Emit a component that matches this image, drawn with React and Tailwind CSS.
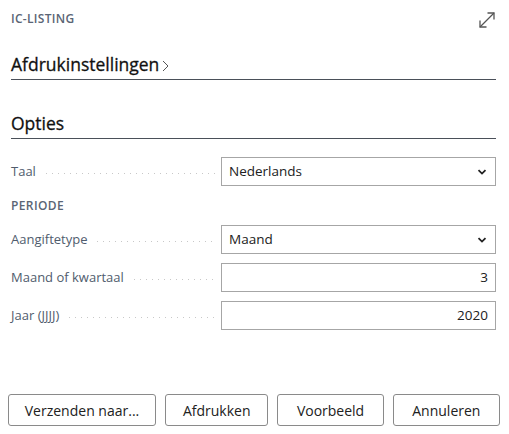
import React from 'react';

const font = { fontFamily: '"Open Sans", "Noto Sans", sans-serif' };

const Chevron = () => (
  <svg width="12" height="12" viewBox="0 0 12 12" className="text-[#212121]">
    <path d="M2.5 4.2 L6 7.6 L9.5 4.2" fill="none" stroke="currentColor" strokeWidth="1.8" />
  </svg>
);

const ExpandIcon = () => (
  <svg width="22" height="22" viewBox="0 0 22 22" className="text-[#555]">
    <path d="M4 18 L18 4" stroke="currentColor" strokeWidth="1.3" fill="none" />
    <path d="M11.5 4 H18 V10.5" stroke="currentColor" strokeWidth="1.3" fill="none" />
    <path d="M4 11.5 V18 H10.5" stroke="currentColor" strokeWidth="1.3" fill="none" />
  </svg>
);

const Field = ({ label, children }) => (
  <div className="flex items-center h-[29px]">
    <div className="w-[210px] flex items-center pr-[6px]">
      <span className="text-[13px] text-[#505c6d] whitespace-nowrap">{label}</span>
      <span className="flex-1 ml-[10px] mt-[4px] h-[1px] bg-[linear-gradient(to_right,#c8c8c8_1px,transparent_1px)] bg-[length:6px_1px]" />
    </div>
    <div className="flex-1 h-full border border-[#a6a6a6] bg-white flex items-center px-[7px] text-[13.5px] text-[#212121]">
      {children}
    </div>
  </div>
);

const App = () => {
  return (
    <div className="w-[509px] h-[434px] bg-white flex flex-col px-[11px] pr-[13px] overflow-hidden" style={font}>
      <div className="flex items-center justify-between h-[36px] pt-[1px]">
        <span className="text-[12px] font-semibold text-[#5a6575] tracking-[0.3px]">IC-LISTING</span>
        <span className="-mr-[2px] mt-[2px]"><ExpandIcon /></span>
      </div>

      <div className="mt-[15px] h-[29px] border-b border-[#4a5059] flex items-center">
        <span className="text-[17.5px] text-[#111] leading-none [-webkit-text-stroke:0.3px_#111]">Afdrukinstellingen</span>
        <svg width="9" height="14" viewBox="0 0 9 14" className="ml-[2px] mt-[2px] text-[#555]">
          <path d="M2 2 L7 7 L2 12" fill="none" stroke="currentColor" strokeWidth="1" />
        </svg>
      </div>

      <div className="mt-[30px] h-[29px] border-b border-[#4a5059] flex items-center">
        <span className="text-[17.5px] text-[#111] leading-none [-webkit-text-stroke:0.3px_#111]">Opties</span>
      </div>

      <div className="mt-[18px] flex flex-col">
        <Field label="Taal">
          <span className="flex-1">Nederlands</span>
          <Chevron />
        </Field>
        <div className="h-[39px] flex items-center">
          <span className="text-[12px] font-semibold text-[#5a6575] tracking-[0.4px]">PERIODE</span>
        </div>
        <div className="flex flex-col gap-[9px]">
          <Field label="Aangiftetype">
            <span className="flex-1">Maand</span>
            <Chevron />
          </Field>
          <Field label="Maand of kwartaal">
            <span className="flex-1 text-right">3</span>
          </Field>
          <Field label="Jaar (JJJJ)">
            <span className="flex-1 text-right">2020</span>
          </Field>
        </div>
      </div>

      <div className="mt-auto mb-[8px] -ml-[3px] -mr-[4px] flex gap-[9px] h-[32px]">
        {[
          ['Verzenden naar...', 'w-[149px]'],
          ['Afdrukken', 'w-[104px]'],
          ['Voorbeeld', 'w-[107px]'],
          ['Annuleren', 'w-[108px]'],
        ].map(([t, w]) => (
          <button
            key={t}
            className={`${w} h-full border border-[#8a8a8a] rounded-[3px] bg-white text-[14px] text-[#212121]`}
          >
            {t}
          </button>
        ))}
      </div>
    </div>
  );
};

export default App;
